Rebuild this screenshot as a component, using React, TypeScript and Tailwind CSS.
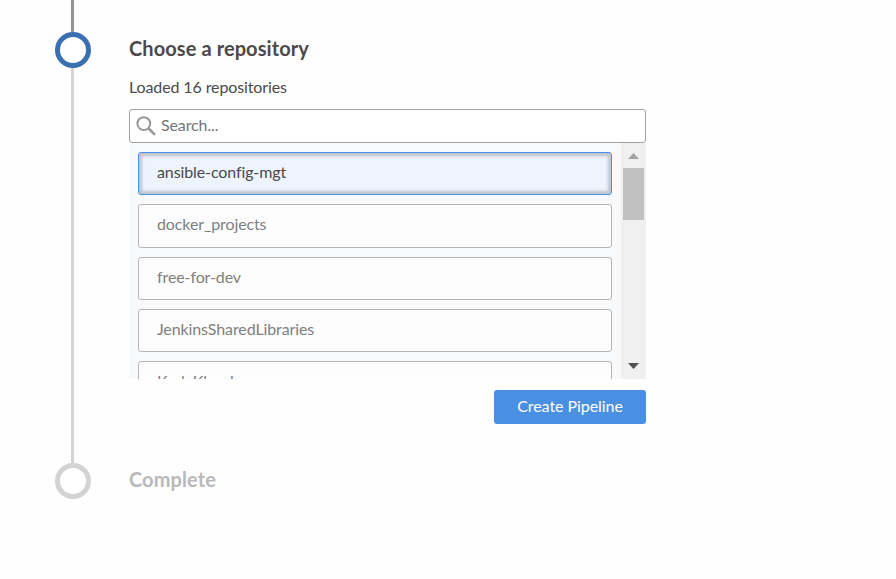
import React from "react";

const repositories = [
  { name: "ansible-config-mgt", height: "h-[43px]", selected: true },
  { name: "docker_projects", height: "h-[44px]", selected: false },
  { name: "free-for-dev", height: "h-[43px]", selected: false },
  { name: "JenkinsSharedLibraries", height: "h-[43px]", selected: false },
  { name: "KodeKloud", height: "h-[43px]", selected: false },
];

function StepRail() {
  return (
    <div className="flex w-9 shrink-0 flex-col items-start">
      <div className="ml-4 h-8 w-[3px] bg-[#949393]" />
      <div className="size-9 shrink-0 rounded-full border-[5px] border-[#3a70b0] bg-white" />
      <div className="ml-4 h-[395px] w-[3px] bg-[#d3d3d3]" />
      <div className="size-9 shrink-0 rounded-full border-[5px] border-[#d3d3d3] bg-white" />
    </div>
  );
}

function SearchBox() {
  return (
    <div className="mt-[12px] flex h-[34px] items-center rounded-[3px] border border-[#a0a0a0] bg-white pl-[6px]">
      <svg viewBox="0 0 20 20" className="size-5 shrink-0" fill="none" stroke="#999999">
        <circle cx="7.8" cy="7.6" r="6.4" strokeWidth="2.1" />
        <path d="M12.3 12.1 19 18.9" strokeWidth="2.7" />
      </svg>
      <span className="ml-[5px] pb-[2px] leading-5 text-[#757575]">Search...</span>
    </div>
  );
}

function Scrollbar() {
  return (
    <div className="flex w-[25px] shrink-0 flex-col items-center bg-[#f0f0f0]">
      <svg viewBox="0 0 11 6" className="mt-[10px] h-[6px] w-[11px] shrink-0">
        <path d="M5.5 0 11 6H0z" fill="#a3a3a3" />
      </svg>
      <div className="mt-[9px] h-[52px] w-[21px] shrink-0 bg-[#c1c1c1]" />
      <svg viewBox="0 0 11 6" className="mt-auto mb-[10px] h-[6px] w-[11px] shrink-0">
        <path d="M0 0H11L5.5 6z" fill="#505050" />
      </svg>
    </div>
  );
}

function RepositoryList() {
  return (
    <div className="flex h-[236px] overflow-hidden bg-[#f8f9fb]">
      <div className="flex flex-1 flex-col gap-[9px] px-[9px] pt-[9px]">
        {repositories.map(({ name, height, selected }) => (
          <button
            key={name}
            className={`${height} flex shrink-0 items-center rounded-[3px] border pb-[4px] pl-[18px] text-left leading-5 ${
              selected
                ? "border-[#4a90e2] bg-[#edf4fd] text-[#4a4a4a] shadow-[inset_0_0_3px_3px_rgba(74,74,74,0.28)]"
                : "border-[#b5b5b5] bg-[#fdfdfd] text-[#808080]"
            }`}
          >
            {name}
          </button>
        ))}
      </div>
      <Scrollbar />
    </div>
  );
}

export default function App() {
  return (
    <main className="flex h-[579px] w-[896px] overflow-hidden bg-[#fefefe] pl-[55px] font-['Lato',sans-serif] text-[16px] tracking-[-0.11px] text-[#4a4a4a]">
      <StepRail />
      <section className="ml-[38px] flex w-[517px] flex-col">
        <h2 className="mt-[36px] text-[20px] leading-6 font-bold tracking-[0.09px]">Choose a repository</h2>
        <p className="mt-[17px] leading-5">Loaded 16 repositories</p>
        <SearchBox />
        <RepositoryList />
        <button className="mt-[11px] h-[34px] w-[152px] self-end rounded-[3px] bg-[#4a90e2] pb-[2px] tracking-[-0.06px] text-white">
          Create Pipeline
        </button>
        <h2 className="mt-[43px] text-[20px] leading-6 font-bold tracking-[0.09px] text-[#b9b9b9]">Complete</h2>
      </section>
    </main>
  );
}
